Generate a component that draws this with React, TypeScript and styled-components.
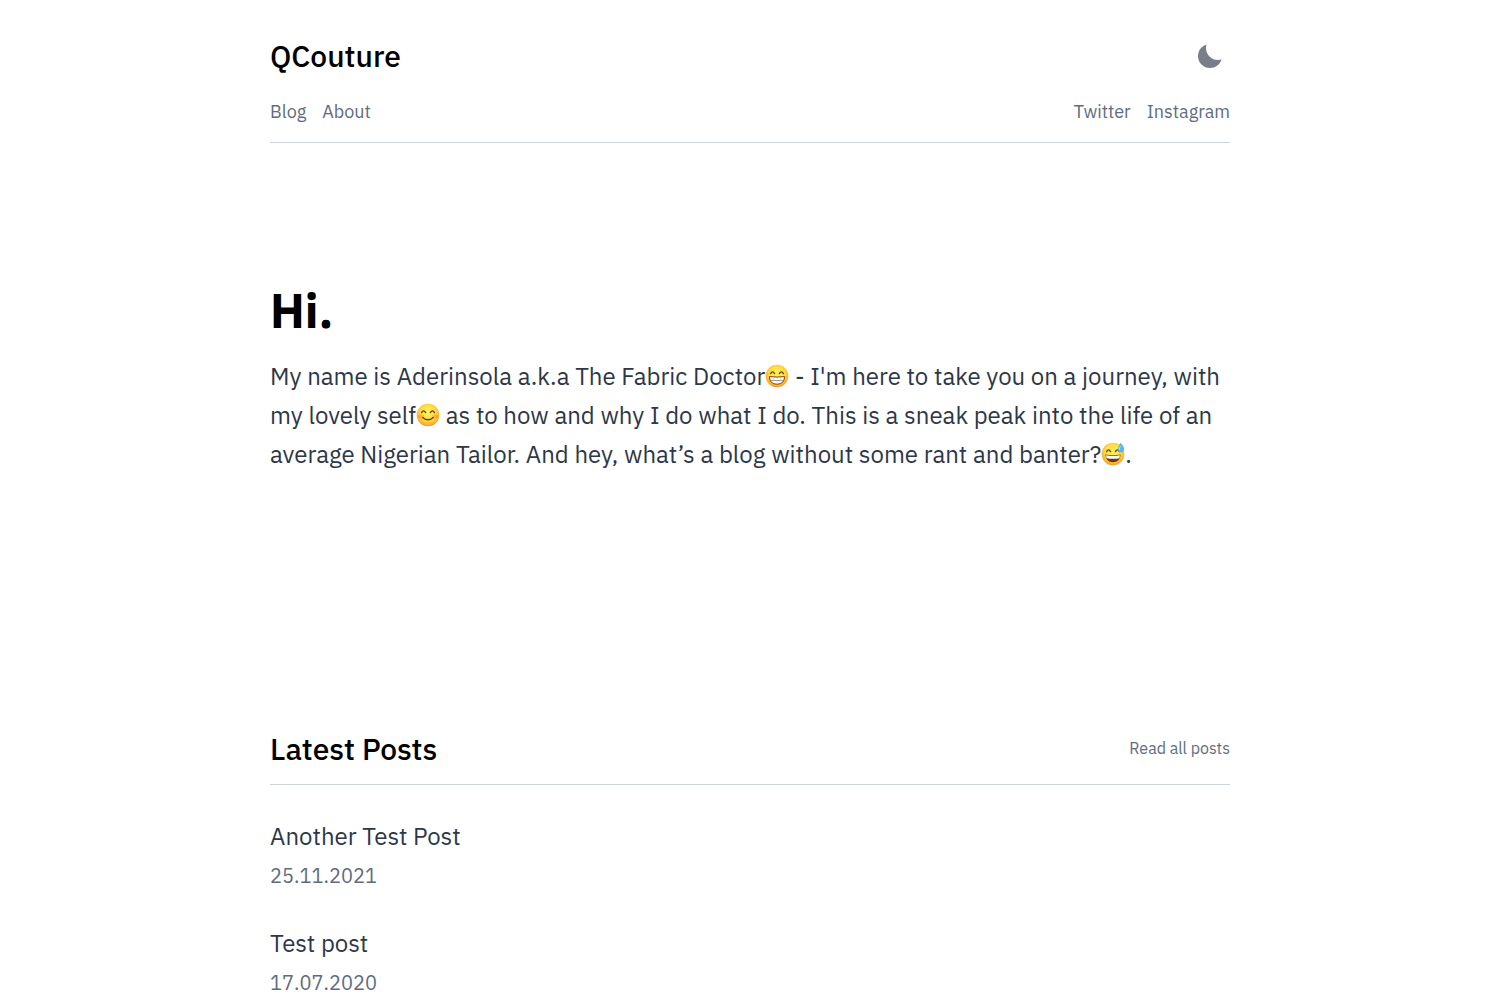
import React, { useState } from "react";
import styled, { createGlobalStyle } from "styled-components";

const GlobalStyle = createGlobalStyle`
  *, *::before, *::after { box-sizing: border-box; }
  body {
    margin: 0;
    background: #fff;
    color: #2d3748;
    font-family: "IBM Plex Sans", Inter, "Liberation Sans", sans-serif;
    -webkit-font-smoothing: antialiased;
  }
  h1, h2, p, ul { margin: 0; padding: 0; }
  a { color: inherit; text-decoration: none; }
  a:hover { text-decoration: underline; }
`;

const Page = styled.div`
  max-width: 1024px;
  margin: 0 auto;
  padding: 36px 32px 0;
`;

const Row = styled.div`
  display: flex;
  align-items: center;
  justify-content: space-between;
`;

const SiteTitle = styled.a`
  color: #000;
  font-size: 30px;
  font-weight: 500;
  line-height: 40px;
`;

const ModeButton = styled.button`
  display: flex;
  align-items: center;
  justify-content: center;
  width: 40px;
  height: 40px;
  padding: 0;
  border: 0;
  background: none;
  cursor: pointer;
`;

const Moon = styled.span`
  width: 24px;
  height: 24px;
  border-radius: 50%;
  box-shadow: inset 8px -8px 0 0 #787f8b;
`;

const NavRow = styled(Row)`
  margin-top: 20px;
  padding-bottom: 14px;
  border-bottom: 1px solid #cbd5e0;
  color: #5f6c80;
  font-size: 18px;
  line-height: 32px;
`;

const Nav = styled.nav`
  display: flex;
  gap: 16px;
`;

const Hero = styled.section`
  margin: 136px 0 256px;
`;

const Hi = styled.h1`
  color: #000;
  font-size: 48px;
  font-weight: 700;
  line-height: 62px;
  margin-bottom: 16px;
`;

const Intro = styled.p`
  font-size: 24px;
  line-height: 39px;
`;

const Emoji = styled.svg`
  width: 24px;
  height: 24px;
  vertical-align: -3px;
`;

const SectionHead = styled(Row)`
  padding-bottom: 17px;
  border-bottom: 1px solid #cbd5e0;
  line-height: 37px;
`;

const SectionTitle = styled.h2`
  color: #000;
  font-size: 30px;
  font-weight: 500;
`;

const MoreLink = styled.a`
  color: #5f6c80;
  font-size: 16px;
`;

const Posts = styled.ul`
  display: grid;
  gap: 29px;
  padding: 32px 0;
  list-style: none;
  line-height: 39px;
`;

const PostTitle = styled.a`
  display: block;
  font-size: 24px;
`;

const PostDate = styled.time`
  display: block;
  color: #5f6c80;
  font-size: 20px;
`;

type Mood = "grin" | "blush" | "sweat";

const labels: Record<Mood, string> = {
  grin: "Beaming face",
  blush: "Smiling face",
  sweat: "Grinning face with sweat",
};

function Face({ mood }: { mood: Mood }) {
  return (
    <Emoji viewBox="0 0 24 24" role="img" aria-label={labels[mood]}>
      <defs>
        <radialGradient id={"skin-" + mood} cx="50%" cy="42%" r="60%">
          <stop offset="0" stopColor="#fff25a" />
          <stop offset="0.55" stopColor="#ffdf45" />
          <stop offset="0.85" stopColor="#fbb02c" />
          <stop offset="1" stopColor="#ec8a1a" />
        </radialGradient>
      </defs>
      <circle cx="12" cy="12" r="11.3" fill={"url(#skin-" + mood + ")"} />
      {mood === "blush" && (
        <g fill="#ff7a2f" opacity="0.4">
          <ellipse cx="4.8" cy="13.4" rx="3" ry="2.2" />
          <ellipse cx="19.2" cy="13.4" rx="3" ry="2.2" />
        </g>
      )}
      <g fill="none" stroke="#6b3a0c" strokeWidth="1.4" strokeLinecap="round">
        <path d="M5.6 9.6Q7.6 6.2 9.6 9.6" />
        <path d="M14.4 9.6Q16.4 6.2 18.4 9.6" />
        {mood === "blush" && <path d="M6.8 14.4Q12 19.2 17.2 14.4" />}
      </g>
      {mood === "grin" && (
        <>
          <path d="M4.4 12.6Q12 13.6 19.6 12.6Q19.4 20.2 12 20.2Q4.6 20.2 4.4 12.6Z" fill="#fff" stroke="#7a430f" strokeWidth="1" />
          <path d="M5 16.2Q12 17 19 16.2" fill="none" stroke="#8d7358" strokeWidth="0.8" />
          <path d="M8.6 13.4V19.2M12 13.6V19.7M15.4 13.4V19.2" fill="none" stroke="#cfc6bb" strokeWidth="0.4" />
        </>
      )}
      {mood === "sweat" && (
        <>
          <path d="M4.4 12.6Q12 13.6 19.6 12.6Q19.2 20.2 12 20.2Q4.8 20.2 4.4 12.6Z" fill="#6b3a0c" />
          <path d="M5 13.2Q12 14.2 19 13.2L18.4 16.2Q12 17.2 5.6 16.2Z" fill="#fff" />
          <path d="M19.4 0.8Q23.6 5 23.2 7.8Q22.6 10.4 20 10.4Q17.2 10.2 17 7.4Q17 5 19.4 0.8Z" fill="#55b9f0" />
          <path d="M19.4 4.2Q18 6.4 18.4 8" fill="none" stroke="#b9e8ff" strokeWidth="1" />
        </>
      )}
    </Emoji>
  );
}

const posts = [
  { title: "Another Test Post", date: "25.11.2021", iso: "2021-11-25" },
  { title: "Test post", date: "17.07.2020", iso: "2020-07-17" },
];

export default function App() {
  const [dark, setDark] = useState(false);
  return (
    <>
      <GlobalStyle />
      <Page>
        <header>
          <Row>
            <SiteTitle href="#home">QCouture</SiteTitle>
            <ModeButton
              type="button"
              aria-label="Toggle dark mode"
              aria-pressed={dark}
              onClick={() => setDark(!dark)}
            >
              <Moon />
            </ModeButton>
          </Row>
          <NavRow>
            <Nav aria-label="Pages">
              <a href="#blog">Blog</a>
              <a href="#about">About</a>
            </Nav>
            <Nav aria-label="Social">
              <a href="#twitter">Twitter</a>
              <a href="#instagram">Instagram</a>
            </Nav>
          </NavRow>
        </header>
        <main>
          <Hero>
            <Hi>Hi.</Hi>
            <Intro>
              My name is Aderinsola a.k.a The Fabric Doctor
              <Face mood="grin" /> - I'm here to take you on a journey, with my
              lovely self
              <Face mood="blush" /> as to how and why I do what I do. This is a
              sneak peak into the life of an average Nigerian Tailor. And hey,
              what’s a blog without some rant and banter?
              <Face mood="sweat" />.
            </Intro>
          </Hero>
          <section>
            <SectionHead>
              <SectionTitle>Latest Posts</SectionTitle>
              <MoreLink href="#blog">Read all posts</MoreLink>
            </SectionHead>
            <Posts>
              {posts.map((post) => (
                <li key={post.iso}>
                  <PostTitle href={"#" + post.iso}>{post.title}</PostTitle>
                  <PostDate dateTime={post.iso}>{post.date}</PostDate>
                </li>
              ))}
            </Posts>
          </section>
        </main>
      </Page>
    </>
  );
}
